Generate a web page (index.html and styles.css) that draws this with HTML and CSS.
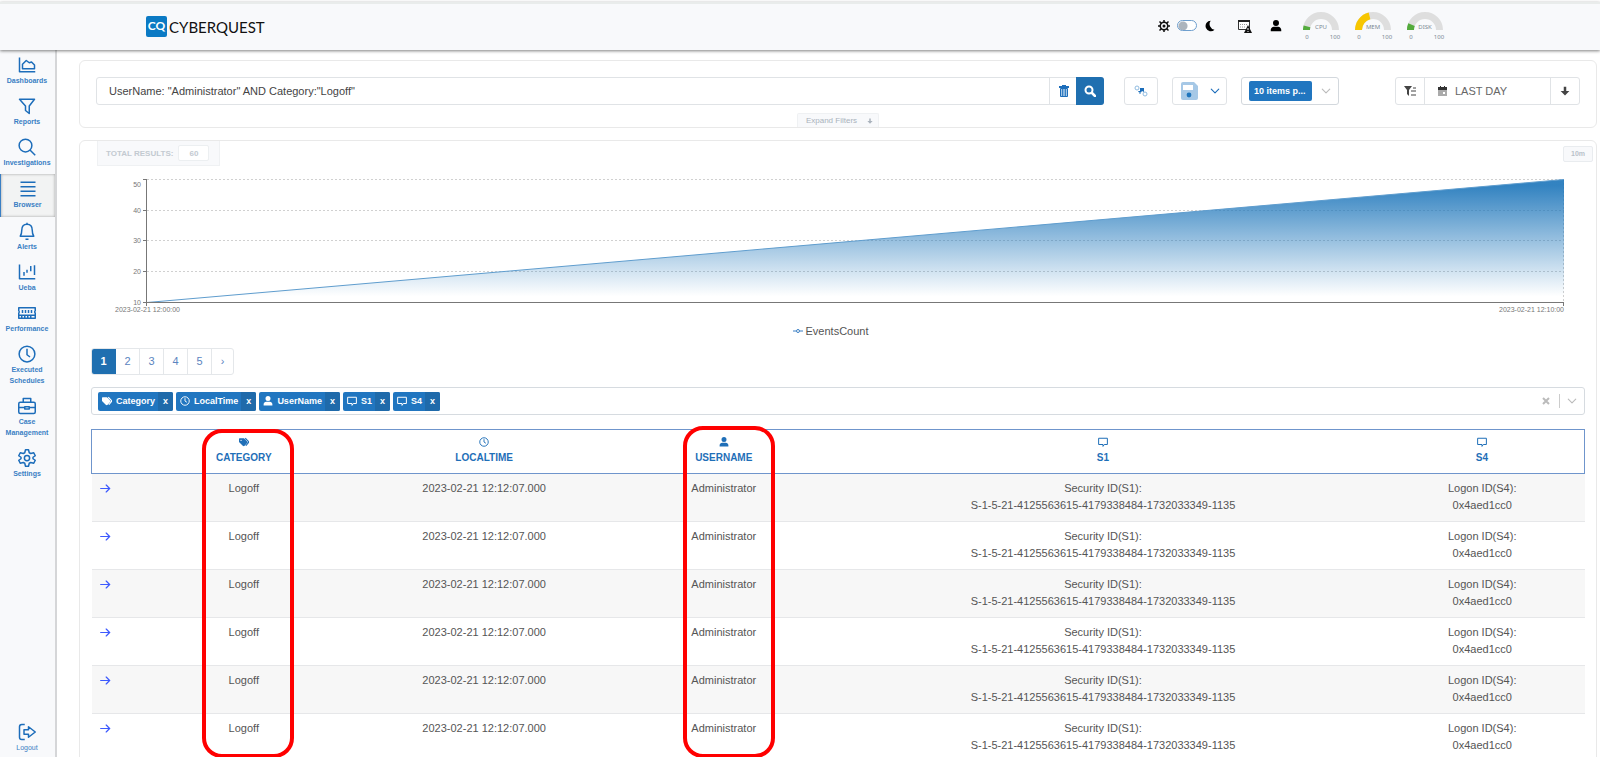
FILE: index.html
```html
<!DOCTYPE html>
<html lang="en">
<head>
    <meta charset="UTF-8" />
    <meta name="viewport" content="width=device-width, initial-scale=1.0" />
    <title>CYBERQUEST - Browser</title>
    <link rel="stylesheet" href="styles.css">
</head>
<body>
<!-- shared icons -->
<svg class="sprite" width="0" height="0" aria-hidden="true">
    <symbol id="i-tags" viewBox="0 0 16 16"><path d="M0 3v5l6 6c1 1 2 1 3 0l4-4c1-1 1-2 0-3L8 2H1Q0 2 0 3z" fill="currentColor"/><circle cx="3.3" cy="5.3" r="1.1" class="hole"/><path d="M10 2l5 5q1 1 0 2l-4 5" fill="none" stroke="currentColor" stroke-width="1.8"/></symbol>
    <symbol id="i-clock" viewBox="0 0 16 16"><g fill="none" stroke="currentColor" stroke-width="1.5"><circle cx="8" cy="8" r="6.8"/><path d="M8 3.5V8l3 2"/></g></symbol>
    <symbol id="i-user" viewBox="0 0 16 16"><path d="M8 0a4 4 0 1 1 0 8 4 4 0 0 1 0-8zM1 15v-2c0-2 2-4 4-4h6c2 0 4 2 4 4v2z" fill="currentColor"/></symbol>
    <symbol id="i-comment" viewBox="0 0 16 16"><path d="M1 2h14v10h-5l-2 3v-3H1z" fill="none" stroke="currentColor" stroke-width="1.6" stroke-linejoin="round"/></symbol>
    <symbol id="i-chevron" viewBox="0 0 16 16"><path d="M2 5l6 6 6-6" fill="none" stroke="currentColor" stroke-width="1.8" stroke-linecap="round" stroke-linejoin="round"/></symbol>
    <symbol id="i-arrow-right" viewBox="0 0 16 16"><path d="M1 8h13M9 3l5 5-5 5" fill="none" stroke="currentColor" stroke-width="1.8" stroke-linecap="round"/></symbol>
    <symbol id="i-arrow-down" viewBox="0 0 16 16"><path d="M6 1h4v7h5l-7 7-7-7h5z" fill="currentColor"/></symbol>
</svg>

<header class="topbar">
    <a class="logo" href="#">
        <span class="logo-mark">CQ</span>
        <span class="logo-text">CYBERQUEST</span>
    </a>
    <div class="top-tools">
        <label class="theme-switch">
            <svg width="12" height="12" viewBox="0 0 16 16"><g fill="none" stroke="#111"><circle cx="8" cy="8" r="5" stroke-width="2"/><path d="M8 0v3M8 13v3M0 8h3M13 8h3M2 2l3 3M11 11l3 3M2 14l3-3M11 5l3-3" stroke-width="2"/></g><circle cx="8" cy="8" r="2" fill="#111"/></svg>
            <input type="checkbox" aria-label="Dark theme" />
            <svg width="12" height="12" viewBox="0 0 16 16"><path d="M9 1a7 7 0 1 0 5 12A7.500 7.500 0 0 1 9 1z" fill="#000"/></svg>
        </label>
        <button class="icon-btn" aria-label="Alerts calendar">
            <svg width="15" height="14" viewBox="0 0 15 14"><path d="M1.500 1.500h11v9h-11z" fill="#fff" stroke="#333"/><path d="M1 1h12v2H1z" fill="#222"/><path d="M3 5.500h7M3 8h5" stroke="#999" stroke-dasharray="1 1"/><path d="M11 6l4 8H7z" fill="#111"/><path d="M11 9v2M11 12v1" stroke="#fff"/></svg>
        </button>
        <button class="icon-btn" aria-label="Account">
            <svg width="12" height="12"><use href="#i-user"/></svg>
        </button>
        <div class="gauges">
            <svg class="gauge" width="42" height="30" viewBox="0 0 42 30"><path d="M6.500 18a14.500 14.500 0 0 1 29 0" class="track"/><path d="M6.500 18a14.500 14.500 0 0 1 .5-3.600" class="ok"/><text x="21" y="17">CPU</text><text x="7" y="27">0</text><text x="35" y="27">100</text></svg>
            <svg class="gauge" width="42" height="30" viewBox="0 0 42 30"><path d="M6.500 18a14.500 14.500 0 0 1 29 0" class="track"/><path d="M6.500 18A14.500 14.500 0 0 1 17.500 3.900" class="warn"/><text x="21" y="17">MEM</text><text x="7" y="27">0</text><text x="35" y="27">100</text></svg>
            <svg class="gauge" width="42" height="30" viewBox="0 0 42 30"><path d="M6.500 18a14.500 14.500 0 0 1 29 0" class="track"/><path d="M6.500 18a14.500 14.500 0 0 1 1-5.400" class="ok"/><text x="21" y="17">DISK</text><text x="7" y="27">0</text><text x="35" y="27">100</text></svg>
        </div>
    </div>
</header>

<div class="layout">
    <nav class="sidebar">
        <a class="nav-item" href="#">
            <svg viewBox="0 0 24 24"><path d="M2 2v19h21M6 17v-6l5-5 4 3 3-1 4 4v5z"/></svg>
            Dashboards
        </a>
        <a class="nav-item" href="#">
            <svg viewBox="0 0 24 24"><path d="M2 3h20l-7 9v10l-5-4v-6z"/></svg>
            Reports
        </a>
        <a class="nav-item" href="#">
            <svg viewBox="0 0 24 24"><circle cx="10" cy="10" r="8.5"/><path d="M16 16l7 7"/></svg>
            Investigations
        </a>
        <a class="nav-item active" href="#">
            <svg viewBox="0 0 24 24"><path d="M2 3h20M2 9h20M2 15h20M2 21h20"/></svg>
            Browser
        </a>
        <a class="nav-item" href="#">
            <svg viewBox="0 0 24 24"><path d="M12 1v2M3 19h18c-2-3-2-5-2-8 0-5-3-8-7-8s-7 3-7 8c0 3 0 5-2 8zM10 23h4"/></svg>
            Alerts
        </a>
        <a class="nav-item" href="#">
            <svg viewBox="0 0 24 24"><path d="M2 2v19h21M8 12v5M12 9v4M17 4v7M22 3v13"/></svg>
            Ueba
        </a>
        <a class="nav-item" href="#">
            <svg viewBox="0 0 24 24"><path d="M1 5h22v4c-1 1-1 2 0 3v7H1v-7c1-1 1-2 0-3zM1 15h22M6 8v4M10 8v4M14 8v4M18 8v4M5 16v3M9 16v3M13 16v3M17 16v3"/></svg>
            Performance
        </a>
        <a class="nav-item" href="#">
            <svg viewBox="0 0 24 24"><circle cx="12" cy="12" r="10.5"/><path d="M12 5v8l4 3"/></svg>
            Executed Schedules
        </a>
        <a class="nav-item" href="#">
            <svg viewBox="0 0 24 24"><rect x="1" y="7" width="22" height="15" rx="2"/><path d="M7 7V2h10v5M1 14h8M15 14h8M9 13h6v3H9z"/></svg>
            Case Management
        </a>
        <a class="nav-item" href="#">
            <svg viewBox="0 0 24 24"><path d="M10 1h4l1 4 2 1 4-1 2 4-3 2v2l3 2-2 4-4-1-2 1-1 4h-4l-1-4-2-1-4 1-2-4 3-2v-2L1 9l2-4 4 1 2-1z"/><circle cx="12" cy="12" r="3.5"/></svg>
            Settings
        </a>
        <a class="nav-item logout" href="#">
            <svg viewBox="0 0 24 24"><path d="M9 2H5Q2 2 2 5v14q0 3 3 3h4M8 9h6V5l9 7-9 7v-4H8z"/></svg>
            Logout
        </a>
    </nav>

    <main class="content">
        <section class="panel filters">
            <div class="toolbar">
                <div class="search-group">
                    <input type="text" class="query" aria-label="Search query" value='UserName: "Administrator" AND Category:"Logoff"' />
                    <button class="trash" aria-label="Clear query">
                        <svg width="10" height="12" viewBox="0 0 10 12"><path d="M0 1h3V0h4v1h3v2H0z" fill="#1c6dba"/><path d="M1.500 3.500h7v8h-7z" fill="#a6c8e6" stroke="#1c6dba"/><path d="M3.700 4v7M6.300 4v7" stroke="#1c6dba"/></svg>
                    </button>
                    <button class="search" aria-label="Search">
                        <svg width="12" height="12" viewBox="0 0 12 12"><circle cx="5" cy="5" r="3.5" fill="none" stroke="#fff" stroke-width="2"/><path d="M8 8l3 3" stroke="#fff" stroke-width="2.5" stroke-linecap="round"/></svg>
                    </button>
                </div>
                <button class="box-btn relations" aria-label="Relations">
                    <svg width="14" height="12" viewBox="0 0 14 12"><path d="M6 3h4v4L8 6 6 9 4 6h2z" fill="#1c6dba"/><circle cx="3" cy="3" r="2" fill="#fff" stroke="#8fbbe0"/><circle cx="11" cy="9" r="2" fill="#fff" stroke="#8fbbe0"/><circle cx="6" cy="8" r="1" fill="#8fbbe0"/></svg>
                </button>
                <button class="box-btn save" aria-label="Save">
                    <svg width="18" height="18" viewBox="0 0 18 18"><path d="M3 0h11l4 4v12a2 2 0 0 1-2 2H3a2 2 0 0 1-2-2V2a2 2 0 0 1 2-2z" fill="#a6c8e6"/><path d="M3 3h10v5H3z" fill="#fff"/><circle cx="9" cy="13" r="2.4" fill="#1f75bd"/></svg>
                    <svg width="10" height="10"><use href="#i-chevron"/></svg>
                </button>
                <div class="page-size">
                    <select aria-label="Items per page"><option>10 items p...</option></select>
                    <svg width="10" height="10"><use href="#i-chevron"/></svg>
                </div>
                <div class="time-group">
                    <button aria-label="Filter list">
                        <svg width="12" height="10" viewBox="0 0 12 10"><path d="M0 0h8L5 4v6L3 8V4z" fill="#444"/><path d="M9 2h3M7 5h5M7 9h5" stroke="#444"/></svg>
                    </button>
                    <button class="range">
                        <svg width="9" height="10" viewBox="0 0 9 10"><path d="M0 3h9v7H0z" fill="#aaa"/><path d="M0 1h9v3H0zM2 0h1v2H2zM6 0h1v2H6z" fill="#333"/><path d="M5 6h2v2H5z" fill="#fff"/></svg>
                        LAST DAY
                    </button>
                    <button aria-label="Download">
                        <svg width="10" height="10"><use href="#i-arrow-down"/></svg>
                    </button>
                </div>
            </div>
            <button class="expand">Expand Filters <svg width="6" height="6"><use href="#i-arrow-down"/></svg></button>
        </section>

        <section class="panel results">
            <div class="stats">
                <label class="total">TOTAL RESULTS: <input type="text" value="60" readonly /></label>
                <button class="interval">10m</button>
            </div>

            <!-- events chart -->
            <div class="chart">
                <svg class="y-axis" width="50" height="132" viewBox="0 0 50 132">
                    <path d="M46 .5h4M46 31.500h4M46 61.500h4M46 92.500h4M46 123.500h4M49.500 0v127" />
                    <text x="44" y="8">50</text>
                    <text x="44" y="34">40</text>
                    <text x="44" y="64">30</text>
                    <text x="44" y="95">20</text>
                    <text x="44" y="126">10</text>
                </svg>
                <svg class="plot" viewBox="0 0 1416 132" preserveAspectRatio="none">
                    <defs>
                        <linearGradient id="events" x1="0" y1="0" x2="0" y2="1">
                            <stop offset="5%" stop-color="#1c75ba" stop-opacity=".9"/>
                            <stop offset="95%" stop-color="#1c75ba" stop-opacity="0"/>
                        </linearGradient>
                    </defs>
                    <path class="grid" d="M0 .5h1416M0 31.500h1416M0 61.500h1416M0 92.500h1416M1415.500 0v123"/>
                    <path d="M0 123.500L1416 .5v123z" fill="url(#events)"/>
                    <path class="line" d="M0 123.500L1416 .5"/>
                    <path class="axis" d="M0 123.500h1416M1415.500 123v4"/>
                </svg>
            </div>
            <div class="x-labels"><span>2023-02-21 12:00:00</span><span>2023-02-21 12:10:00</span></div>
            <div class="legend">
                <svg width="10" height="6" viewBox="0 0 10 6"><path d="M0 3h3M7 3h3" /><circle cx="5" cy="3" r="1.5"/></svg>
                EventsCount
            </div>

            <div class="results-body">
                <nav class="pagination" aria-label="Pages">
                    <a class="current" href="#">1</a>
                    <a href="#">2</a>
                    <a href="#">3</a>
                    <a href="#">4</a>
                    <a href="#">5</a>
                    <a href="#">›</a>
                </nav>

                <div class="fields">
                    <span class="tag"><svg><use href="#i-tags"/></svg>Category<button aria-label="Remove Category">x</button></span>
                    <span class="tag"><svg><use href="#i-clock"/></svg>LocalTime<button aria-label="Remove LocalTime">x</button></span>
                    <span class="tag"><svg><use href="#i-user"/></svg>UserName<button aria-label="Remove UserName">x</button></span>
                    <span class="tag"><svg><use href="#i-comment"/></svg>S1<button aria-label="Remove S1">x</button></span>
                    <span class="tag"><svg><use href="#i-comment"/></svg>S4<button aria-label="Remove S4">x</button></span>
                    <button class="fields-clear" aria-label="Clear fields"><svg width="8" height="8" viewBox="0 0 8 8"><path d="M1 1l6 6M7 1L1 7" stroke="currentColor" stroke-width="2"/></svg></button>
                    <button class="fields-open" aria-label="Choose fields"><svg width="10" height="10"><use href="#i-chevron"/></svg></button>
                </div>

                <div class="table-wrap">
                    <table>
                        <thead>
                            <tr>
                                <th class="col-open"></th>
                                <th class="col-category"><svg><use href="#i-tags"/></svg>CATEGORY</th>
                                <th class="col-time"><svg><use href="#i-clock"/></svg>LOCALTIME</th>
                                <th class="col-user"><svg><use href="#i-user"/></svg>USERNAME</th>
                                <th class="col-s1"><svg><use href="#i-comment"/></svg>S1</th>
                                <th class="col-s4"><svg><use href="#i-comment"/></svg>S4</th>
                            </tr>
                        </thead>
                        <tbody>
                            <tr><td><a href="#" aria-label="Open event"><svg><use href="#i-arrow-right"/></svg></a></td><td>Logoff</td><td>2023-02-21 12:12:07.000</td><td>Administrator</td><td>Security ID(S1):<br>S-1-5-21-4125563615-4179338484-1732033349-1135</td><td>Logon ID(S4):<br>0x4aed1cc0</td></tr>
                            <tr><td><a href="#" aria-label="Open event"><svg><use href="#i-arrow-right"/></svg></a></td><td>Logoff</td><td>2023-02-21 12:12:07.000</td><td>Administrator</td><td>Security ID(S1):<br>S-1-5-21-4125563615-4179338484-1732033349-1135</td><td>Logon ID(S4):<br>0x4aed1cc0</td></tr>
                            <tr><td><a href="#" aria-label="Open event"><svg><use href="#i-arrow-right"/></svg></a></td><td>Logoff</td><td>2023-02-21 12:12:07.000</td><td>Administrator</td><td>Security ID(S1):<br>S-1-5-21-4125563615-4179338484-1732033349-1135</td><td>Logon ID(S4):<br>0x4aed1cc0</td></tr>
                            <tr><td><a href="#" aria-label="Open event"><svg><use href="#i-arrow-right"/></svg></a></td><td>Logoff</td><td>2023-02-21 12:12:07.000</td><td>Administrator</td><td>Security ID(S1):<br>S-1-5-21-4125563615-4179338484-1732033349-1135</td><td>Logon ID(S4):<br>0x4aed1cc0</td></tr>
                            <tr><td><a href="#" aria-label="Open event"><svg><use href="#i-arrow-right"/></svg></a></td><td>Logoff</td><td>2023-02-21 12:12:07.000</td><td>Administrator</td><td>Security ID(S1):<br>S-1-5-21-4125563615-4179338484-1732033349-1135</td><td>Logon ID(S4):<br>0x4aed1cc0</td></tr>
                            <tr><td><a href="#" aria-label="Open event"><svg><use href="#i-arrow-right"/></svg></a></td><td>Logoff</td><td>2023-02-21 12:12:07.000</td><td>Administrator</td><td>Security ID(S1):<br>S-1-5-21-4125563615-4179338484-1732033349-1135</td><td>Logon ID(S4):<br>0x4aed1cc0</td></tr>
                        </tbody>
                    </table>
                    <!-- highlighted columns -->
                    <div class="mark mark-category"></div>
                    <div class="mark mark-user"></div>
                </div>
            </div>
        </section>
    </main>
</div>
</body>
</html>
```

FILE: styles.css
```css
* {
    margin: 0;
    padding: 0;
    box-sizing: border-box;
}

html, body {
    height: 100%;
    overflow: hidden;
}

body {
    display: flex;
    flex-direction: column;
    padding-top: 2px;
    font-family: "Liberation Sans", Arial, sans-serif;
    font-size: 11px;
    color: #555;
    background: #fff;
}

button, input, select {
    font-family: inherit;
    border: none;
    background: none;
    color: inherit;
}

button {
    cursor: pointer;
}

a {
    text-decoration: none;
}

svg {
    display: block;
    flex-shrink: 0;
}

.sprite {
    position: absolute;
}

.hole {
    fill: #fff;
}

/* top bar */
.topbar {
    display: flex;
    align-items: center;
    justify-content: space-between;
    flex-shrink: 0;
    height: 48px;
    padding: 0 9%;
    border-top: 2px solid #e9eceb;
    background: #f8f9fb;
    box-shadow: 0 1px 3px rgba(0, 0, 0, 0.5);
    z-index: 2;
}

.logo {
    display: flex;
    align-items: center;
    gap: 2px;
    margin-left: 2px;
    padding-bottom: 1px;
    color: #111;
}

.logo-mark {
    width: 21px;
    height: 21px;
    border-radius: 2px;
    background: #0b7ac4;
    color: #fff;
    font: bold 12px/20px Lato, sans-serif;
    text-align: center;
}

.logo-text {
    font: 15px/20px Lato, sans-serif;
}

.top-tools {
    display: flex;
    align-items: center;
    margin-right: 10px;
    padding-bottom: 3px;
}

.theme-switch {
    display: flex;
    align-items: center;
    gap: 7px;
    margin-right: 21px;
}

.theme-switch input {
    appearance: none;
    width: 20px;
    height: 11px;
    border: 1px solid #6f9fce;
    border-radius: 6px;
    background: radial-gradient(circle at 5px 5px, #adb5bd 4px, #fff 5px);
}

.icon-btn {
    color: #000;
    margin-right: 18px;
}

.gauges {
    display: flex;
    gap: 10px;
    padding-top: 3px;
}

.gauge path {
    fill: none;
    stroke-width: 7;
}

.gauge .track {
    stroke: #dedede;
}

.gauge .ok {
    stroke: #53ab3c;
}

.gauge .warn {
    stroke: #f7c600;
}

.gauge text {
    font: 6px "Noto Sans", sans-serif;
    fill: #7a8894;
    text-anchor: middle;
}

/* side menu */
.layout {
    display: flex;
    flex: 1;
    min-height: 0;
}

.sidebar {
    display: flex;
    flex-direction: column;
    flex-shrink: 0;
    width: 57px;
    padding-top: 1px;
    border-right: 2px solid #d5d6d8;
    background: #f8f9fb;
}

.nav-item {
    display: flex;
    flex-direction: column;
    align-items: center;
    gap: 1px;
    padding: 5px 1px 6px 0;
    font-size: 7px;
    line-height: 11px;
    font-weight: bold;
    text-align: center;
    color: #3a7fc4;
}

.nav-item svg {
    width: 18px;
    height: 18px;
    fill: none;
    stroke: #1c6dba;
    stroke-width: 2;
    stroke-linejoin: round;
}

.nav-item.active {
    padding: 6px 1px 7px 0;
    border-left: 1px solid #3a7fc4;
    background: #f2f3f3;
    box-shadow: inset 0 0 3px rgba(0, 0, 0, 0.35);
}

.logout {
    margin-top: auto;
    padding-bottom: 4px;
    font-weight: normal;
}

/* panels */
.content {
    flex: 1;
    min-width: 0;
    padding: 10px 3px 0 22px;
}

.panel {
    border: 1px solid #e9e9e9;
    border-radius: 6px;
}

.filters {
    display: flex;
    flex-direction: column;
    align-items: center;
    gap: 8px;
    padding-top: 16px;
}

.toolbar {
    display: flex;
    align-self: stretch;
    height: 28px;
    padding: 0 16px;
}

.search-group {
    display: flex;
    flex: 1;
    border: 1px solid #e0e3e6;
    border-radius: 3px;
    margin-right: 20px;
}

.query {
    flex: 1;
    min-width: 0;
    padding: 0 12px;
    font-size: 11px;
    color: #444;
}

.trash,
.search {
    display: flex;
    align-items: center;
    justify-content: center;
    width: 28px;
    border-left: 1px solid #e0e3e6;
}

.search {
    margin: -1px;
    border: none;
    border-radius: 0 3px 3px 0;
    background: #1f6fb0;
}

.box-btn {
    display: flex;
    align-items: center;
    justify-content: center;
    border: 1px solid #e0e3e6;
    border-radius: 3px;
    color: #1c6dba;
    margin-right: 14px;
}

.relations {
    width: 34px;
}

.save {
    gap: 12px;
    width: 55px;
}

.page-size {
    display: flex;
    align-items: center;
    gap: 9px;
    width: 98px;
    padding-left: 7px;
    margin-right: 56px;
    border: 1px solid #d3d8dd;
    border-radius: 3px;
    color: #bbb;
}

.page-size select {
    appearance: none;
    width: 63px;
    height: 20px;
    padding: 0 5px;
    border-radius: 2px;
    background: #2176c0;
    color: #fff;
    font-size: 9px;
    font-weight: bold;
}

.time-group {
    display: flex;
    border: 1px solid #e0e3e6;
    border-radius: 3px;
}

.time-group button {
    display: flex;
    align-items: center;
    justify-content: center;
    width: 28px;
    color: #444;
}

.time-group .range {
    justify-content: flex-start;
    gap: 8px;
    width: 127px;
    padding-left: 13px;
    border: solid #e0e3e6;
    border-width: 0 1px;
    font-size: 11px;
    color: #666;
}

.expand {
    display: flex;
    align-items: center;
    gap: 10px;
    height: 14px;
    padding: 0 5px 0 8px;
    border: 1px solid #eff1f3;
    border-bottom: none;
    border-radius: 2px 2px 0 0;
    background: #f8f9fb;
    font-size: 8px;
    color: #a9b2bc;
}

.results {
    margin-top: 12px;
}

.stats {
    display: flex;
    align-items: center;
    justify-content: space-between;
    height: 25px;
    padding: 0 3px 0 17px;
}

.total {
    display: flex;
    align-items: center;
    gap: 5px;
    height: 25px;
    padding: 0 10px 0 8px;
    border: 1px solid #eff1f3;
    border-top: none;
    background: #f8f9fb;
    font-size: 8px;
    font-weight: bold;
    color: #c3cad1;
}

.total input {
    width: 31px;
    height: 16px;
    border: 1px solid #eceff1;
    border-radius: 2px;
    background: #fff;
    font-size: 8px;
    font-weight: bold;
    text-align: center;
}

.interval {
    width: 30px;
    height: 16px;
    border: 1px solid #e9ecef;
    border-radius: 2px;
    background: #f8f9fb;
    font-size: 7px;
    font-weight: bold;
    color: #b9c1c9;
}

/* chart */
.chart {
    display: flex;
    padding: 0 32px 0 17px;
    margin-top: 13px;
}

.y-axis path {
    fill: none;
    stroke: #777;
}

.y-axis text {
    font-size: 7px;
    fill: #777;
    text-anchor: end;
}

.plot {
    flex: 1;
    min-width: 0;
    height: 132px;
}

.plot path {
    vector-effect: non-scaling-stroke;
}

.plot .grid {
    fill: none;
    stroke: #d0d0d0;
    stroke-dasharray: 2 2;
}

.plot .line {
    fill: none;
    stroke: #5f9dce;
}

.plot .axis {
    fill: none;
    stroke: #777;
}

.x-labels {
    display: flex;
    justify-content: space-between;
    padding: 0 32px 0 35px;
    margin-top: -5px;
    font-size: 7px;
    line-height: 8px;
    color: #777;
}

.legend {
    display: flex;
    align-items: center;
    justify-content: center;
    gap: 3px;
    padding: 0 32px 0 17px;
    margin-top: 9px;
    line-height: 16px;
    color: #555;
}

.legend svg {
    fill: none;
    stroke: #3a7fc4;
}

/* results */
.results-body {
    padding: 9px 11px 0;
}

.pagination {
    display: flex;
    width: max-content;
    border: 1px solid #e4e7ea;
    border-radius: 3px;
    overflow: hidden;
}

.pagination a {
    width: 24px;
    line-height: 25px;
    border-right: 1px solid #e4e7ea;
    text-align: center;
    color: #5b84c0;
}

.pagination a:last-child {
    width: 21px;
    border-right: none;
}

.pagination .current {
    border-color: #1f6fb0;
    background: #1f6fb0;
    color: #fff;
    font-weight: bold;
}

.fields {
    display: flex;
    align-items: center;
    gap: 3px;
    height: 28px;
    padding: 0 7px 0 6px;
    margin-top: 12px;
    border: 1px solid #d6dbe0;
    border-radius: 3px;
    color: #bbb;
}

.tag {
    display: flex;
    align-items: center;
    height: 19px;
    padding-left: 4px;
    border-radius: 2px;
    background: #2176c0;
    color: #fff;
    font-size: 9px;
    font-weight: bold;
    overflow: hidden;
}

.tag svg {
    width: 10px;
    height: 10px;
    margin-right: 4px;
}

.tag button {
    width: 15px;
    height: 19px;
    margin-left: 3px;
    background: #1f6aaa;
    font-size: 9px;
    font-weight: bold;
}

.fields-clear {
    margin-left: auto;
    padding-right: 6px;
}

.fields-open {
    padding: 2px 0 2px 7px;
    border-left: 1px solid #ccc;
}

.table-wrap {
    position: relative;
    margin-top: 14px;
}

table {
    width: 100%;
    table-layout: fixed;
    border-collapse: collapse;
    text-align: center;
}

thead tr {
    border: 1px solid #6f95cc;
}

th {
    height: 44px;
    font-size: 10px;
    line-height: 16px;
    color: #1f6fb8;
}

th svg {
    width: 10px;
    height: 10px;
    margin: 0 auto 3px;
}

.col-open { width: 3.3%; }
.col-category { width: 13.8%; }
.col-time { width: 18.4%; }
.col-user { width: 13.7%; }
.col-s1 { width: 37.1%; }
.col-s4 { width: 13.7%; }

td {
    height: 48px;
    padding-top: 6px;
    border-bottom: 1px solid #e6e7e9;
    line-height: 17px;
    vertical-align: top;
}

td a {
    display: block;
    padding: 3px 0 0 8px;
    color: #3d5afe;
}

td svg {
    width: 11px;
    height: 11px;
}

tbody tr:nth-child(odd) {
    background: #f7f7f7;
}

.mark {
    position: absolute;
    top: 0;
    bottom: 4px;
    width: 92px;
    border: 4px solid #f00;
    border-radius: 20px;
}

.mark-category {
    left: 7.4%;
}

.mark-user {
    top: -3px;
    left: 39.6%;
}
```
